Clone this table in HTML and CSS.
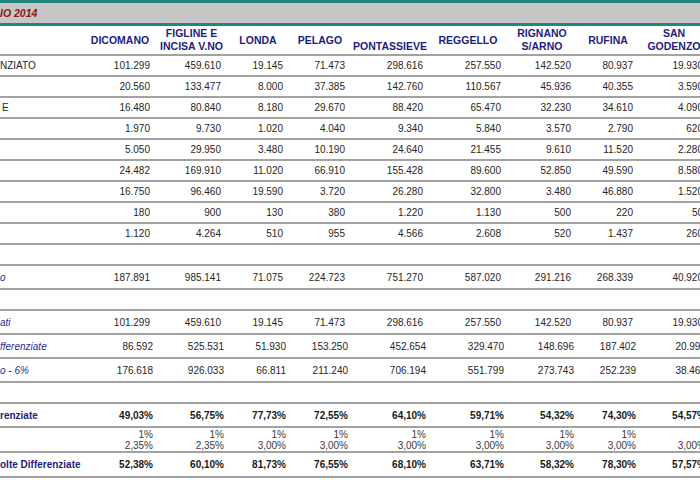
FILE: index.html
```html
<!DOCTYPE html>
<html lang="it">
<head>
<meta charset="utf-8">
<title>Raccolta rifiuti 2014</title>
<link rel="stylesheet" href="styles.css">
</head>
<body>
<div class="band"><span class="title">IO 2014</span></div>
<table class="grid">
  <colgroup>
    <col class="c-lbl"><col class="c72"><col class="c71"><col class="c62"><col class="c62"><col class="c78"><col class="c78"><col class="c70"><col class="c62"><col class="c70">
  </colgroup>
  <thead>
    <tr>
      <th class="lbl"></th>
      <th>DICOMANO</th>
      <th>FIGLINE E<br>INCISA V.NO</th>
      <th>LONDA</th>
      <th>PELAGO</th>
      <th class="low">PONTASSIEVE</th>
      <th>REGGELLO</th>
      <th>RIGNANO<br>S/ARNO</th>
      <th>RUFINA</th>
      <th>SAN<br>GODENZO</th>
    </tr>
  </thead>
  <tbody>
    <tr class="r"><td class="lbl">NZIATO</td><td>101.299</td><td>459.610</td><td>19.145</td><td>71.473</td><td>298.616</td><td>257.550</td><td>142.520</td><td>80.937</td><td>19.930</td></tr>
    <tr class="r"><td class="lbl"></td><td>20.560</td><td>133.477</td><td>8.000</td><td>37.385</td><td>142.760</td><td>110.567</td><td>45.936</td><td>40.355</td><td>3.590</td></tr>
    <tr class="r"><td class="lbl lbl-e">E</td><td>16.480</td><td>80.840</td><td>8.180</td><td>29.670</td><td>88.420</td><td>65.470</td><td>32.230</td><td>34.610</td><td>4.090</td></tr>
    <tr class="r"><td class="lbl"></td><td>1.970</td><td>9.730</td><td>1.020</td><td>4.040</td><td>9.340</td><td>5.840</td><td>3.570</td><td>2.790</td><td>620</td></tr>
    <tr class="r"><td class="lbl"></td><td>5.050</td><td>29.950</td><td>3.480</td><td>10.190</td><td>24.640</td><td>21.455</td><td>9.610</td><td>11.520</td><td>2.280</td></tr>
    <tr class="r"><td class="lbl"></td><td>24.482</td><td>169.910</td><td>11.020</td><td>66.910</td><td>155.428</td><td>89.600</td><td>52.850</td><td>49.590</td><td>8.580</td></tr>
    <tr class="r"><td class="lbl"></td><td>16.750</td><td>96.460</td><td>19.590</td><td>3.720</td><td>26.280</td><td>32.800</td><td>3.480</td><td>46.880</td><td>1.520</td></tr>
    <tr class="r"><td class="lbl"></td><td>180</td><td>900</td><td>130</td><td>380</td><td>1.220</td><td>1.130</td><td>500</td><td>220</td><td>50</td></tr>
    <tr class="r"><td class="lbl"></td><td>1.120</td><td>4.264</td><td>510</td><td>955</td><td>4.566</td><td>2.608</td><td>520</td><td>1.437</td><td>260</td></tr>
    <tr class="r"><td class="lbl"></td><td></td><td></td><td></td><td></td><td></td><td></td><td></td><td></td><td></td></tr>
    <tr class="t"><td class="lbl it">o</td><td>187.891</td><td>985.141</td><td>71.075</td><td>224.723</td><td>751.270</td><td>587.020</td><td>291.216</td><td>268.339</td><td>40.920</td></tr>
    <tr class="r"><td class="lbl"></td><td></td><td></td><td></td><td></td><td></td><td></td><td></td><td></td><td></td></tr>
    <tr class="t"><td class="lbl it">ati</td><td>101.299</td><td>459.610</td><td>19.145</td><td>71.473</td><td>298.616</td><td>257.550</td><td>142.520</td><td>80.937</td><td>19.930</td></tr>
    <tr class="t shift"><td class="lbl it">fferenziate</td><td>86.592</td><td>525.531</td><td>51.930</td><td>153.250</td><td>452.654</td><td>329.470</td><td>148.696</td><td>187.402</td><td>20.990</td></tr>
    <tr class="t shift"><td class="lbl it">o - 6%</td><td>176.618</td><td>926.033</td><td>66.811</td><td>211.240</td><td>706.194</td><td>551.799</td><td>273.743</td><td>252.239</td><td>38.465</td></tr>
    <tr class="r"><td class="lbl"></td><td></td><td></td><td></td><td></td><td></td><td></td><td></td><td></td><td></td></tr>
    <tr class="t shift pct"><td class="lbl bl">renziate</td><td>49,03%</td><td>56,75%</td><td>77,73%</td><td>72,55%</td><td>64,10%</td><td>59,71%</td><td>54,32%</td><td>74,30%</td><td>54,57%</td></tr>
    <tr class="m shift two"><td class="lbl"></td><td>1%<br>2,35%</td><td>1%<br>2,35%</td><td>1%<br>3,00%</td><td>1%<br>3,00%</td><td>1%<br>3,00%</td><td>1%<br>3,00%</td><td>1%<br>3,00%</td><td>1%<br>3,00%</td><td><br>3,00%</td></tr>
    <tr class="m shift pct"><td class="lbl bl">olte Differenziate</td><td>52,38%</td><td>60,10%</td><td>81,73%</td><td>76,55%</td><td>68,10%</td><td>63,71%</td><td>58,32%</td><td>78,30%</td><td>57,57%</td></tr>
  </tbody>
</table>
</body>
</html>
```
FILE: styles.css
```css
html, body {
  margin: 0;
  padding: 0;
  overflow: hidden;
  background: #ffffff;
}
body {
  width: 700px;
  height: 480px;
  font-family: "Liberation Sans", Arial, sans-serif;
}
.band {
  height: 20px;
  background: #c6c6c6;
  border-top: 3px solid #21877e;
  border-bottom: 3px solid #21877e;
  display: flex;
  align-items: center;
}
.title {
  font-weight: bold;
  font-style: italic;
  font-size: 10.5px;
  color: #861a1a;
}
.grid {
  border-collapse: separate;
  border-spacing: 0;
  table-layout: fixed;
  width: 709px;
}
.c-lbl { width: 84px; }
.c72 { width: 72px; }
.c71 { width: 71px; }
.c62 { width: 62px; }
.c70 { width: 70px; }
.c78 { width: 78px; }
.grid th {
  height: 27px;
  padding: 0;
  font-size: 10.5px;
  line-height: 13px;
  font-weight: bold;
  color: #1d1d7c;
  text-align: center;
  vertical-align: middle;
  border-bottom: 2px solid #a2a2a2;
  white-space: nowrap;
}
.grid th.low {
  vertical-align: bottom;
  padding-bottom: 1px;
}
.grid td {
  padding: 0 6px 0 0;
  font-size: 10px;
  line-height: 11px;
  color: #262626;
  text-align: right;
  vertical-align: middle;
  border-bottom: 2px solid #a2a2a2;
  white-space: nowrap;
}
.grid td.lbl {
  text-align: left;
  padding: 0;
  color: #262626;
}
.grid td.lbl-e { padding-left: 2px; }
.grid td.it {
  font-style: italic;
  color: #2b2b8e;
}
.grid td.bl {
  font-weight: bold;
  color: #1d1d7c;
}
.r td { height: 19px; }
.t td { height: 22px; }
.m td { height: 23px; }
.shift td { padding-right: 3px; }
.pct td { font-weight: bold; color: #1a1a1a; }
.two td { color: #3a3a3a; }
```
